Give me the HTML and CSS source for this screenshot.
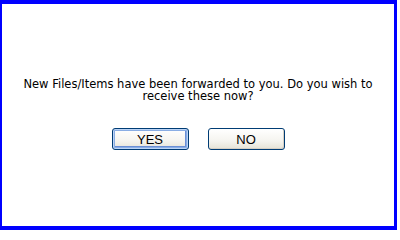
FILE: index.html
```html
<!DOCTYPE html>
<html>
<head>
<meta charset="utf-8">
<link rel="stylesheet" href="styles.css">
</head>
<body>
<div class="dialog">
  <p class="message">New Files/Items have been forwarded to you. Do you wish to receive these now?</p>
  <div class="actions">
    <button class="btn btn-default">YES</button>
    <button class="btn">NO</button>
  </div>
</div>
</body>
</html>
```
FILE: styles.css
```css
html, body {
  margin: 0;
  padding: 0;
  background: #ffffff;
}
.dialog {
  box-sizing: border-box;
  width: 397px;
  height: 230px;
  border-style: solid;
  border-color: #0000ff;
  border-width: 4px 3px 4px 2px;
  background: #ffffff;
  display: flex;
  flex-direction: column;
  align-items: center;
  padding-top: 74px;
}
.message {
  margin: 0;
  width: 372px;
  text-align: center;
  font-family: "DejaVu Sans", Verdana, sans-serif;
  font-size: 11.5px;
  line-height: 12px;
  color: #000000;
}
.actions {
  display: flex;
  gap: 19px;
  margin-top: 26px;
}
.btn {
  box-sizing: border-box;
  width: 77px;
  height: 22px;
  padding: 0;
  border: 1px solid #003c74;
  border-radius: 3px;
  background: linear-gradient(to bottom, #ffffff 0%, #f5f4ef 60%, #e6e3d6 100%);
  font-family: "Liberation Sans", Arial, sans-serif;
  font-size: 13px;
  color: #000000;
  box-shadow: inset -1px -1px 0 #d6d0c5;
}
.btn-default {
  box-shadow: inset 0 0 0 1px #bcd4f6, inset 0 0 0 2px #89ade4, inset -1px -1px 0 2px #6b8fd6;
}
```
